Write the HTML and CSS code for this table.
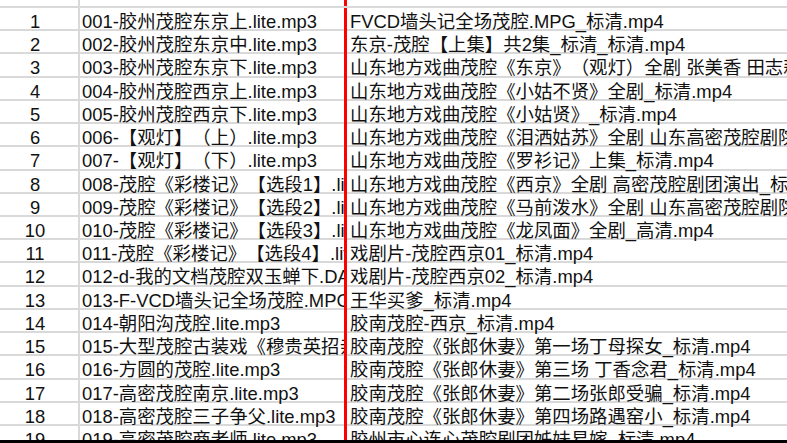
FILE: index.html
```html
<!DOCTYPE html>
<html lang="zh-CN">
<head>
<meta charset="utf-8">
<title>茂腔文件列表</title>
<link rel="stylesheet" href="styles.css">
</head>
<body>
<div class="sheet">
  <div class="row top"><div class="cell num"></div><div class="cell a"></div><div class="cell b"></div></div>
  <div class="row"><div class="cell num">1</div><div class="cell a">001-胶州茂腔东京上.lite.mp3</div><div class="cell b">FVCD墙头记全场茂腔.MPG_标清.mp4</div></div>
  <div class="row"><div class="cell num">2</div><div class="cell a">002-胶州茂腔东京中.lite.mp3</div><div class="cell b">东京-茂腔【上集】共2集_标清_标清.mp4</div></div>
  <div class="row"><div class="cell num">3</div><div class="cell a">003-胶州茂腔东京下.lite.mp3</div><div class="cell b">山东地方戏曲茂腔《东京》（观灯）全剧 张美香 田志耘_标清.mp4</div></div>
  <div class="row"><div class="cell num">4</div><div class="cell a">004-胶州茂腔西京上.lite.mp3</div><div class="cell b">山东地方戏曲茂腔《小姑不贤》全剧_标清.mp4</div></div>
  <div class="row"><div class="cell num">5</div><div class="cell a">005-胶州茂腔西京下.lite.mp3</div><div class="cell b">山东地方戏曲茂腔《小姑贤》_标清.mp4</div></div>
  <div class="row"><div class="cell num">6</div><div class="cell a">006-【观灯】（上）.lite.mp3</div><div class="cell b">山东地方戏曲茂腔《泪洒姑苏》全剧 山东高密茂腔剧院演出_标清.mp4</div></div>
  <div class="row"><div class="cell num">7</div><div class="cell a">007-【观灯】（下）.lite.mp3</div><div class="cell b">山东地方戏曲茂腔《罗衫记》上集_标清.mp4</div></div>
  <div class="row"><div class="cell num">8</div><div class="cell a">008-茂腔《彩楼记》【选段1】.lite.mp3</div><div class="cell b">山东地方戏曲茂腔《西京》全剧 高密茂腔剧团演出_标清.mp4</div></div>
  <div class="row"><div class="cell num">9</div><div class="cell a">009-茂腔《彩楼记》【选段2】.lite.mp3</div><div class="cell b">山东地方戏曲茂腔《马前泼水》全剧 山东高密茂腔剧院演出_标清.mp4</div></div>
  <div class="row"><div class="cell num">10</div><div class="cell a">010-茂腔《彩楼记》【选段3】.lite.mp3</div><div class="cell b">山东地方戏曲茂腔《龙凤面》全剧_高清.mp4</div></div>
  <div class="row"><div class="cell num">11</div><div class="cell a">011-茂腔《彩楼记》【选段4】.lite.mp3</div><div class="cell b">戏剧片-茂腔西京01_标清.mp4</div></div>
  <div class="row"><div class="cell num">12</div><div class="cell a">012-d-我的文档茂腔双玉蝉下.DAT</div><div class="cell b">戏剧片-茂腔西京02_标清.mp4</div></div>
  <div class="row"><div class="cell num">13</div><div class="cell a">013-F-VCD墙头记全场茂腔.MPG</div><div class="cell b">王华买爹_标清.mp4</div></div>
  <div class="row"><div class="cell num">14</div><div class="cell a">014-朝阳沟茂腔.lite.mp3</div><div class="cell b">胶南茂腔-西京_标清.mp4</div></div>
  <div class="row"><div class="cell num">15</div><div class="cell a">015-大型茂腔古装戏《穆贵英招亲》.lite.mp3</div><div class="cell b">胶南茂腔《张郎休妻》第一场丁母探女_标清.mp4</div></div>
  <div class="row"><div class="cell num">16</div><div class="cell a">016-方圆的茂腔.lite.mp3</div><div class="cell b">胶南茂腔《张郎休妻》第三场 丁香念君_标清.mp4</div></div>
  <div class="row"><div class="cell num">17</div><div class="cell a">017-高密茂腔南京.lite.mp3</div><div class="cell b">胶南茂腔《张郎休妻》第二场张郎受骗_标清.mp4</div></div>
  <div class="row"><div class="cell num">18</div><div class="cell a">018-高密茂腔三子争父.lite.mp3</div><div class="cell b">胶南茂腔《张郎休妻》第四场路遇窑小_标清.mp4</div></div>
  <div class="row"><div class="cell num">19</div><div class="cell a">019-高密茂腔商老师.lite.mp3</div><div class="cell b">胶州市心连心茂腔剧团姊妹易嫁_标清.mp4</div></div>
</div>
<div class="edge"></div>
</body>
</html>
```
FILE: styles.css
```css
html, body {
  margin: 0;
  padding: 0;
  background: #ffffff;
  overflow: hidden;
}
body {
  width: 787px;
  height: 443px;
  display: flex;
  flex-direction: column;
  font-family: "Liberation Sans", "Noto Sans CJK SC", sans-serif;
  font-size: 18.4px;
  color: #111111;
  text-spacing-trim: space-all;
}
.sheet {
  flex: 1;
  min-height: 0;
  overflow: hidden;
}
.row {
  display: grid;
  grid-template-columns: 80px 264px 1fr;
  height: 23.22px;
  box-sizing: border-box;
  border-bottom: 2px solid #d9d9d9;
}
.row.top {
  height: 8px;
}
.cell {
  white-space: nowrap;
  overflow-x: clip;
  overflow-y: visible;
  line-height: 21px;
  padding-top: 3px;
  height: 100%;
  box-sizing: border-box;
}
.num {
  text-align: center;
  padding-right: 8px;
  border-right: 2px solid #d9d9d9;
}
.a {
  padding-left: 2px;
}
.b {
  border-left: 3px solid #ff0000;
  padding-left: 3px;
}
.edge {
  height: 3px;
  background: #000000;
}
```
